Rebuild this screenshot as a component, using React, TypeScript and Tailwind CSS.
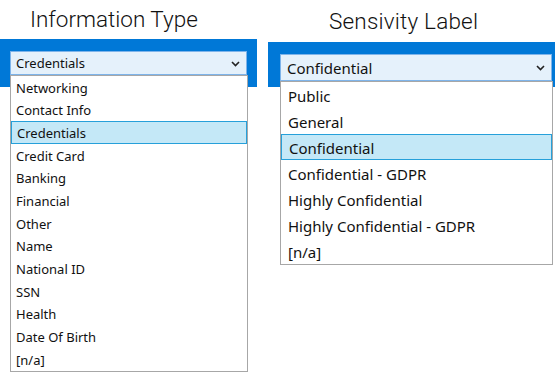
import React from "react";

const leftItems = [
  "Networking",
  "Contact Info",
  "Credentials",
  "Credit Card",
  "Banking",
  "Financial",
  "Other",
  "Name",
  "National ID",
  "SSN",
  "Health",
  "Date Of Birth",
  "[n/a]",
];

const rightItems = [
  "Public",
  "General",
  "Confidential",
  "Confidential - GDPR",
  "Highly Confidential",
  "Highly Confidential - GDPR",
  "[n/a]",
];

function Chevron() {
  return (
    <svg width="9" height="6" viewBox="0 0 9 6" className="shrink-0">
      <polyline points="1,1 4.5,4.5 8,1" fill="none" stroke="#222" strokeWidth="1.6" />
    </svg>
  );
}

export default function App() {
  const uiFont = { fontFamily: '"Noto Sans", "Open Sans", sans-serif' };
  return (
    <div className="w-[555px] h-[390px] bg-white flex overflow-hidden" style={uiFont}>
      {/* Left */}
      <div className="w-[257px] flex flex-col">
        <div className="h-[39px] flex items-center pl-[30px] text-[22.5px] tracking-[0px] font-light text-[#111]" style={{ fontFamily: 'Roboto, sans-serif' }}>
          Information Type
        </div>
        <div className="relative h-[48px] bg-[#0078d7] pt-[12px] pl-[10px] pr-[10px]">
          <div className="h-[24px] bg-[#e5f1fb] border border-[#7eb4ea] flex items-center justify-between pl-[5px] pr-[6px] pt-[1px] text-[13px] text-[#111]">
            <span>Credentials</span>
            <Chevron />
          </div>
          <div className="absolute left-[10px] top-[36px] w-[238px] bg-white border border-[#a7a7a7] text-[13px] text-[#111]">
            {leftItems.map((t) => (
              <div
                key={t}
                className={
                  "h-[22.7px] flex items-center pl-[5px] pt-[2px] " +
                  (t === "Credentials" ? "bg-[#c4e8f7] border border-[#26a0da] pl-[4px]" : "")
                }
              >
                {t}
              </div>
            ))}
          </div>
        </div>
      </div>
      <div className="w-[11px]" />
      {/* Right */}
      <div className="flex-1 flex flex-col">
        <div className="h-[42px] flex items-center pl-[61px] pt-[2px] text-[22.5px] tracking-[0.2px] font-light text-[#111]" style={{ fontFamily: 'Roboto, sans-serif' }}>
          Sensivity Label
        </div>
        <div className="relative h-[45px] bg-[#0078d7] pt-[12px] pl-[12px] pr-[3px]">
          <div className="h-[27px] bg-[#e5f1fb] border border-[#7eb4ea] flex items-center justify-between pl-[6px] pr-[6px] pt-[1px] text-[15px] text-[#111]">
            <span>Confidential</span>
            <Chevron />
          </div>
          <div className="absolute left-[12px] top-[39px] w-[273px] bg-white border border-[#a7a7a7] text-[15px] text-[#111]">
            {rightItems.map((t) => (
              <div
                key={t}
                className={
                  "h-[26px] flex items-center pl-[7px] pt-[2px] " +
                  (t === "Confidential" ? "bg-[#c4e8f7] border border-[#26a0da] pl-[6px]" : "")
                }
              >
                {t}
              </div>
            ))}
          </div>
        </div>
      </div>
    </div>
  );
}
